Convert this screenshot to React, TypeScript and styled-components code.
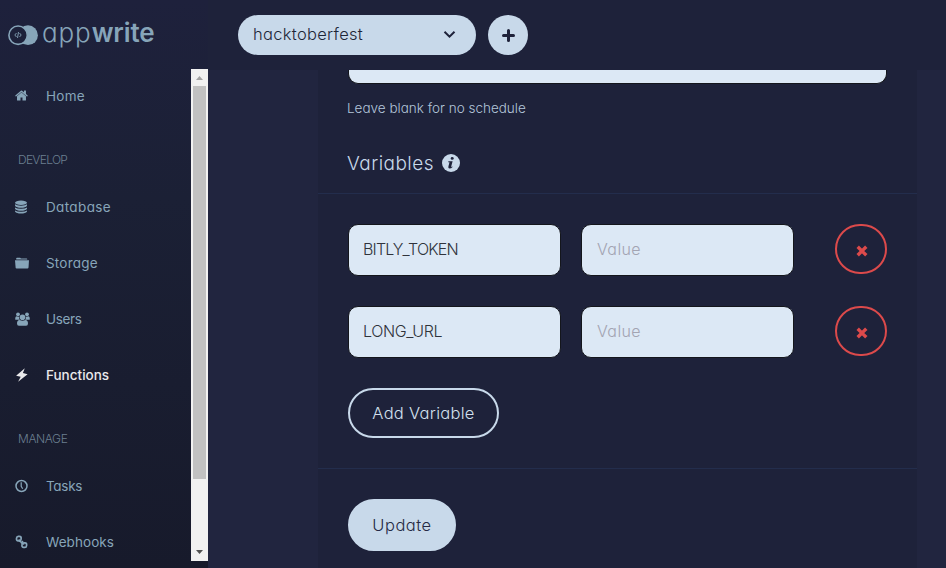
import React from 'react';
import styled, { createGlobalStyle, css } from 'styled-components';

const GlobalStyle = createGlobalStyle`
  * { box-sizing: border-box; }
  body {
    margin: 0;
    overflow: hidden;
    background: #21253f;
    font-family: Inter, 'Open Sans', sans-serif;
    font-feature-settings: 'cv11' 1;
    font-weight: 300;
  }
`;

const Page = styled.div`
  display: flex;
  width: 946px;
  height: 568px;
  overflow: hidden;
`;

const Sidebar = styled.aside`
  display: flex;
  flex-direction: column;
  width: 208px;
  height: 568px;
  flex: none;
  background: linear-gradient(#1e213c 0%, #1b2035 35%, #171a2b 100%);
`;

const Brand = styled.div`
  display: flex;
  height: 69px;
  flex: none;
  padding: 19px 0 0 8px;
  color: #87a5b9;
`;

const BrandMark = styled.svg`
  width: 30px;
  height: 21px;
  margin: 6px 4px 0 0;
`;

const BrandName = styled.div`
  font-size: 26px;
  line-height: 27px;
  white-space: nowrap;
`;

const BrandThin = styled.span`
  font-weight: 300;
  letter-spacing: 0.9px;
`;

const BrandBold = styled.span`
  font-weight: 600;
  letter-spacing: -0.15px;
`;

const SidebarBody = styled.div`
  display: flex;
  height: 492px;
`;

const Nav = styled.nav`
  width: 191px;
  height: 492px;
  overflow: hidden;
`;

const NavItem = styled.a<{ $active?: boolean }>`
  display: flex;
  align-items: center;
  height: 56px;
  padding: 0 0 2px 15px;
  color: ${p => (p.$active ? '#eaeaec' : '#87a5b9')};
  font-weight: ${p => (p.$active ? 500 : 400)};
  font-size: 13.5px;
`;

const NavIcon = styled.svg`
  width: 14px;
  height: 14px;
  margin-right: 17px;
  overflow: visible;
`;

const NavSection = styled.div`
  height: 55px;
  padding: 27px 0 0 18px;
  color: #6b7f90;
  font-size: 12px;
  line-height: 16px;
`;

const Label = styled.span<{ $spacing?: number }>`
  letter-spacing: ${p => p.$spacing ?? 0}px;
  white-space: nowrap;
`;

const ScrollBar = styled.div`
  display: flex;
  flex-direction: column;
  align-items: center;
  width: 17px;
  height: 492px;
  background: #f1f1f1;
`;

const ScrollArrow = styled.svg`
  width: 17px;
  height: 17px;
`;

const ScrollThumb = styled.div`
  width: 13px;
  height: 393px;
  background: #c1c1c1;
  margin-bottom: 65px;
`;

const Content = styled.div`
  width: 738px;
  height: 568px;
`;

const TopBar = styled.header`
  display: flex;
  align-items: flex-start;
  gap: 12px;
  height: 70px;
  padding: 15px 0 0 30px;
  background: #1e223a;
`;

const ProjectSelect = styled.div`
  display: flex;
  align-items: center;
  justify-content: space-between;
  width: 238px;
  height: 40px;
  padding: 0 20px 2px 15px;
  border-radius: 20px;
  background: #c8d9ea;
  color: #1d2637;
  font-size: 16.5px;
`;

const Chevron = styled.svg`
  width: 13px;
  height: 9px;
`;

const AddProject = styled.button`
  display: grid;
  place-items: center;
  width: 40px;
  height: 40px;
  padding: 0;
  border: 0;
  border-radius: 50%;
  background: #c8d9ea;
`;

const Main = styled.main`
  padding: 0 29px 0 110px;
`;

const Card = styled.section`
  display: flex;
  flex-direction: column;
  height: 498px;
  background: #1e223a;
`;

const fieldLook = css`
  border: 1px solid #14161c;
  background: #dce8f5;
`;

const ScheduleField = styled.div`
  width: 539px;
  height: 14px;
  flex: none;
  margin-left: 30px;
  border-radius: 0 0 10px 10px;
  ${fieldLook}
  border-top: 0;
`;

const Hint = styled.p`
  margin: 16px 0 0 29px;
  color: #b4c6da;
  font-size: 13.5px;
  line-height: 17px;
`;

const Heading = styled.h2`
  display: flex;
  align-items: center;
  gap: 8px;
  margin: 34px 0 18px;
  padding-left: 29px;
  height: 24px;
  color: #c8d9ea;
  font-weight: 300;
  font-size: 19px;
`;

const Rule = styled.hr<{ $gap?: number }>`
  width: 100%;
  height: 1px;
  flex: none;
  margin: ${p => p.$gap ?? 0}px 0 0;
  border: 0;
  background: #232d4c;
`;

const Variables = styled.div`
  display: flex;
  flex-direction: column;
  gap: 30px;
  padding: 30px 30px 0;
`;

const VariableRow = styled.div`
  display: grid;
  grid-template-columns: 213px 213px 52px;
  column-gap: 20px;
  height: 52px;
`;

const Field = styled.input<{ $spacing?: number }>`
  width: 213px;
  height: 52px;
  padding: 0 14px 2px;
  border-radius: 10px;
  outline: 0;
  color: #30333b;
  font: inherit;
  font-feature-settings: inherit;
  font-size: 16px;
  letter-spacing: ${p => p.$spacing ?? 0.4}px;
  ${fieldLook}
  &::placeholder { color: #a3a4b2; opacity: 1; }
  &:placeholder-shown { padding-left: 15px; }
`;

const RemoveButton = styled.button`
  display: grid;
  place-items: center;
  width: 52px;
  height: 50px;
  margin-left: 21px;
  padding: 3px 0 0 1px;
  border: 2px solid #dc4a4b;
  border-radius: 26px;
  background: transparent;
`;

const PillButton = styled.button<{ $filled?: boolean }>`
  width: ${p => (p.$filled ? 108 : 151)}px;
  height: ${p => (p.$filled ? 52 : 50)}px;
  flex: none;
  margin: 30px 0 0 30px;
  padding: 0 0 1px;
  border: 2px solid #c8d9ea;
  border-radius: 26px;
  background: ${p => (p.$filled ? '#c8d9ea' : 'transparent')};
  color: ${p => (p.$filled ? '#252943' : '#d3e0ee')};
  font: inherit;
  font-feature-settings: inherit;
  font-size: 16.5px;
`;

const InfoBadge = styled.svg`
  width: 18px;
  height: 18px;
`;

const Cross = () => (
  <svg width="12" height="12" viewBox="0 0 12 12">
    <path d="M2.900 2.900 9.100 9.100M9.100 2.900 2.900 9.100" stroke="#dc4a4b" strokeWidth="3.400" strokeLinecap="square" />
  </svg>
);

const glyphs: Record<string, React.ReactNode> = {
  home: (
    <path transform="translate(-.5 -.4) scale(.0078)" d="M1472 992v480q0 26-19 45t-45 19h-384v-384h-256v384h-384q-26 0-45-19t-19-45v-480q0-1 .5-3t.5-3l575-474 575 474q1 2 1 6zm223-69l-62 74q-8 9-21 11h-3q-13 0-21-7l-692-577-692 577q-12 8-24 7-13-2-21-11l-62-74q-8-10-7-23.500t11-21.500l719-599q32-26 76-26t76 26l244 204v-195q0-14 9-23t23-9h192q14 0 23 9t9 23v408l219 182q10 8 11 21.500t-7 23.500z" />
  ),
  database: (
    <>
      <ellipse cx="6" cy="2.700" rx="6" ry="2.200" />
      <path d="M0 4.300q1.800 1.400 6 1.400t6-1.400v1.400q-1.500 2-6 2t-6-2z" />
      <path d="M0 7.400q1.800 1.400 6 1.400t6-1.400v1.400q-1.500 2-6 2t-6-2z" />
      <path d="M0 10.400q1.800 1.400 6 1.400t6-1.400v1.200q-1.500 2-6 2t-6-2z" />
    </>
  ),
  storage: (
    <>
      <path d="M1.200 3.400V2.500q0-.8.8-.8h3q.8 0 .8.8h5.800q.7 0 .7.900z" />
      <path d="M0 4.300h14l-.5 7.200q-.1.900-1 .9h-11q-.8 0-.9-.9z" />
    </>
  ),
  users: (
    <>
      <circle cx="3" cy="2.300" r="1.900" />
      <circle cx="12" cy="2.300" r="1.900" />
      <path d="M.2 7.300Q.2 4.300 1.700 4.300q1.200.7 2.400.2-.3 2.200.8 3.300H1.300Q.3 7.900.2 7.300zM14.800 7.300q0-3-1.500-3-1.200.7-2.400.2.300 2.200-.8 3.300h3.600q1 .1 1.100-.5z" />
      <circle cx="7.500" cy="5.200" r="2.800" />
      <path d="M2 11.500q0-3.500 2.600-3.500 2.900 1.500 5.800 0 2.600 0 2.600 3.500 0 2.200-1.900 2.200H3.900Q2 13.700 2 11.500z" />
    </>
  ),
  functions: <path d="M9.800.2 1.100 7.700 5.700 8.700 3.100 13.700 12.600 6.200 7.900 5.100z" />,
  tasks: (
    <g fill="none" stroke="currentColor" strokeWidth="1.500">
      <circle cx="6.500" cy="7" r="5.500" />
      <path d="M6.200 3.300v4l1.500 2.400" strokeWidth="1.200" />
    </g>
  ),
  webhooks: (
    <g fill="none" stroke="currentColor" strokeWidth="1.700">
      <rect x="1.500" y="1.400" width="4.600" height="4.600" rx="1.900" transform="rotate(5 4 4)" />
      <rect x="7" y="7.800" width="4.600" height="4.600" rx="1.900" transform="rotate(5 9 10)" />
      <path d="M4.100 4.200q.1 2.600 2.500 3l2.700 2.200M6 8.500l2-2.500" strokeWidth="1.400" />
    </g>
  ),
};

const Item = ({ icon, text, spacing, active }: { icon: string; text: string; spacing?: number; active?: boolean }) => (
  <NavItem $active={active}>
    <NavIcon viewBox="0 0 14 14" fill="currentColor">{glyphs[icon]}</NavIcon>
    <Label $spacing={spacing}>{text}</Label>
  </NavItem>
);

const variables = [
  { name: 'BITLY_TOKEN', spacing: -0.82 },
  { name: 'LONG_URL', spacing: -0.4 },
];

export default function App() {
  return (
    <>
      <GlobalStyle />
      <Page>
        <Sidebar>
          <Brand>
            <BrandMark viewBox="0 0 30 21">
              <circle cx="20" cy="10.200" r="9.900" fill="#87a5b9" />
              <circle cx="10.100" cy="10.200" r="9.200" fill="#1d213a" stroke="#87a5b9" strokeWidth="1.600" />
              <path d="M8.500 8 6.800 10l1.700 2M11.500 8l1.700 2-1.700 2M10.500 7l-1 6" fill="none" stroke="#87a5b9" strokeWidth=".9" />
            </BrandMark>
            <BrandName><BrandThin>app</BrandThin><BrandBold>write</BrandBold></BrandName>
          </Brand>
          <SidebarBody>
            <Nav>
              <Item icon="home" text="Home" spacing={0.3} />
              <NavSection><Label $spacing={-0.7}>DEVELOP</Label></NavSection>
              <Item icon="database" text="Database" spacing={0.36} />
              <Item icon="storage" text="Storage" spacing={0.2} />
              <Item icon="users" text="Users" spacing={-0.35} />
              <Item icon="functions" text="Functions" active />
              <NavSection><Label $spacing={-0.4}>MANAGE</Label></NavSection>
              <Item icon="tasks" text="Tasks" spacing={-0.3} />
              <Item icon="webhooks" text="Webhooks" spacing={0.06} />
            </Nav>
            <ScrollBar>
              <ScrollArrow viewBox="0 0 17 17"><path d="M5 11h7L8.500 7z" fill="#a3a3a3" /></ScrollArrow>
              <ScrollThumb />
              <ScrollArrow viewBox="0 0 17 17"><path d="M5 6h7l-3.500 4z" fill="#505050" /></ScrollArrow>
            </ScrollBar>
          </SidebarBody>
        </Sidebar>
        <Content>
          <TopBar>
            <ProjectSelect>
              <Label $spacing={0.3}>hacktoberfest</Label>
              <Chevron viewBox="0 0 13 9"><path d="m1.500 1.700 5 5 5-5" fill="none" stroke="#1e223a" strokeWidth="2" /></Chevron>
            </ProjectSelect>
            <AddProject aria-label="Add project">
              <svg width="13" height="13" viewBox="0 0 13 13"><path d="M6.500 1.500v10M1.500 6.500h10" stroke="#1e223a" strokeWidth="3" strokeLinecap="round" /></svg>
            </AddProject>
          </TopBar>
          <Main>
            <Card>
              <ScheduleField />
              <Hint><Label>Leave blank for no schedule</Label></Hint>
              <Heading>
                <Label $spacing={0.45}>Variables</Label>
                <InfoBadge viewBox="0 0 18 18">
                  <circle cx="9" cy="9" r="9" fill="#c8d9ea" />
                  <path d="M6.400 7.300h4.200L9.200 12.500q-.2.900 1.200.1l.2.500q-1.600 1.500-3.100 1.500-1.600 0-1.100-2l1.100-4.300H6.200z" fill="#1e223a" />
                  <ellipse cx="10.200" cy="4.400" rx="1.500" ry="1.400" fill="#1e223a" />
                </InfoBadge>
              </Heading>
              <Rule />
              <Variables>
                {variables.map(v => (
                  <VariableRow key={v.name}>
                    <Field $spacing={v.spacing} defaultValue={v.name} />
                    <Field placeholder="Value" />
                    <RemoveButton aria-label="Remove variable"><Cross /></RemoveButton>
                  </VariableRow>
                ))}
              </Variables>
              <PillButton><Label $spacing={0.28}>Add Variable</Label></PillButton>
              <Rule $gap={30} />
              <PillButton $filled><Label $spacing={0.5}>Update</Label></PillButton>
            </Card>
          </Main>
        </Content>
      </Page>
    </>
  );
}
